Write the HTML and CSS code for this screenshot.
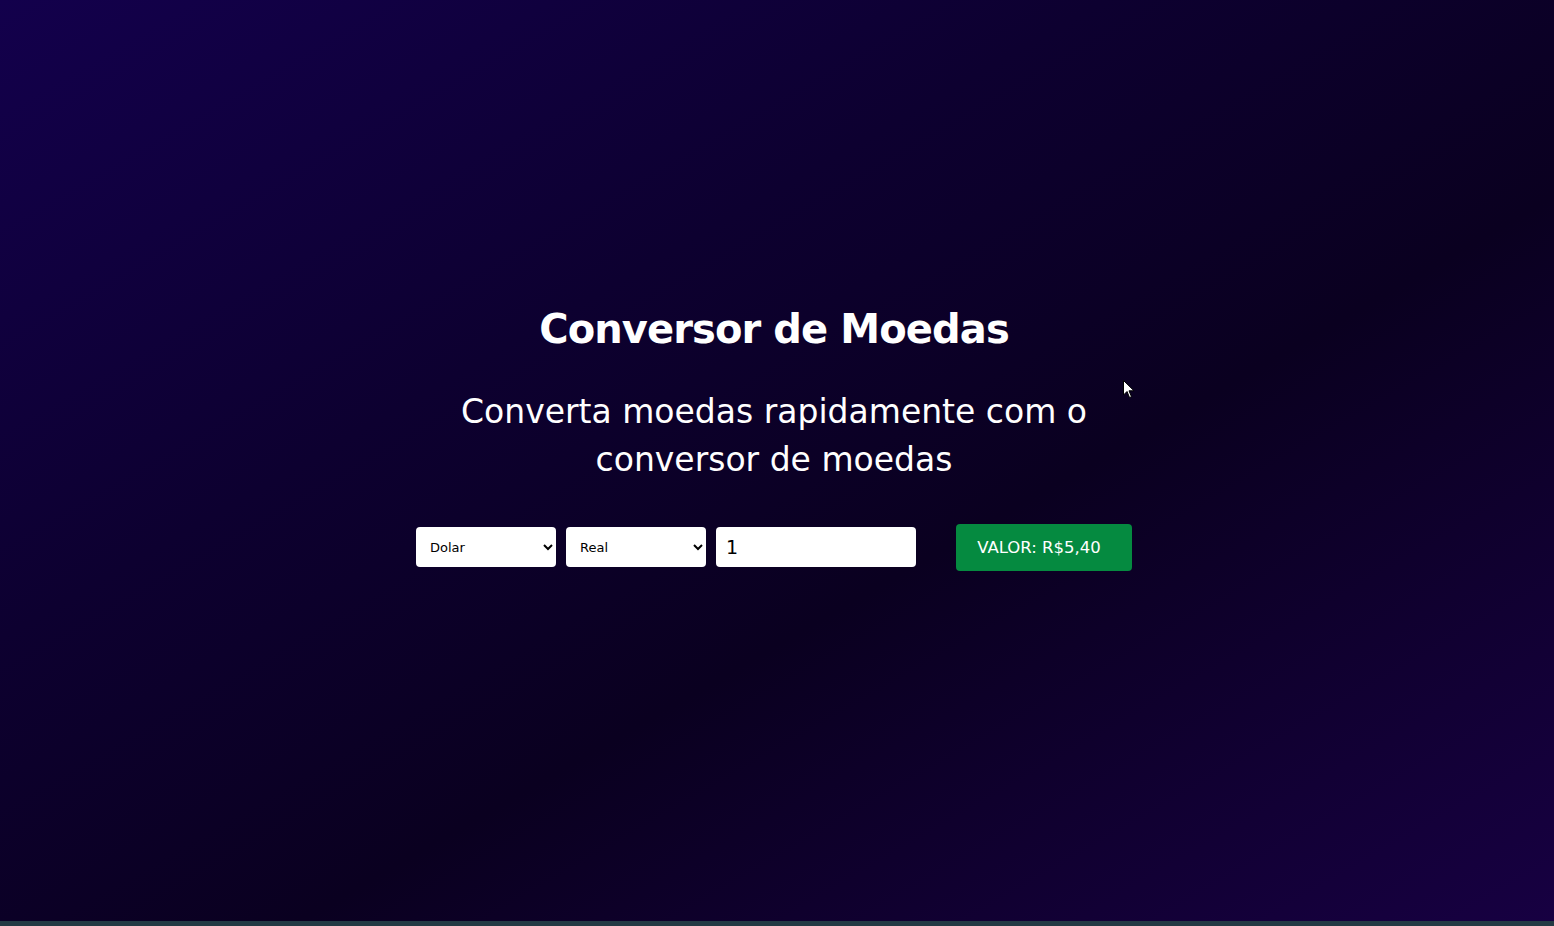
FILE: index.html
```html
<!DOCTYPE html>
<html lang="pt-BR">
<head>
<meta charset="utf-8">
<title>Conversor de Moedas</title>
<link rel="stylesheet" href="styles.css">
</head>
<body>
<main class="page">
  <section class="conversor">
    <h1 class="titulo">Conversor de Moedas</h1>
    <p class="subtitulo">Converta moedas rapidamente com o conversor de moedas</p>
    <div class="controles">
      <select class="campo campo-select">
        <option>Dolar</option>
      </select>
      <select class="campo campo-select">
        <option>Real</option>
      </select>
      <input class="campo campo-input" type="text" value="1">
      <button class="botao">VALOR: R$5,40</button>
    </div>
  </section>
</main>
<div class="barra"></div>
<svg class="cursor" width="12" height="19" viewBox="0 0 12 19"><path d="M0.5 0.5 L0.5 15 L4 11.5 L6.5 17.5 L8.5 16.7 L6 10.8 L11 10.8 Z" fill="#fff" stroke="#000" stroke-width="1"/></svg>
</body>
</html>
```
FILE: styles.css
```css
* { box-sizing: border-box; }
html, body { margin: 0; padding: 0; height: 100%; }
body {
  font-family: "DejaVu Sans", "Open Sans", sans-serif;
  background: linear-gradient(150deg, #13004c 0%, #0d0030 35%, #0a0020 60%, #170042 100%);
  color: #fff;
  overflow: hidden;
  position: relative;
}
.page {
  height: 921px;
  display: flex;
  justify-content: center;
  padding-right: 6px;
}
.conversor {
  display: flex;
  flex-direction: column;
  align-items: center;
  padding-top: 301px;
}
.titulo {
  margin: 0;
  font-size: 40px;
  line-height: 56px;
  font-weight: 700;
  letter-spacing: -0.9px;
}
.subtitulo {
  margin: 31px 0 0;
  width: 680px;
  text-align: center;
  font-size: 33px;
  line-height: 48px;
  font-weight: 400;
}
.controles {
  margin-top: 43px;
  display: flex;
  align-items: flex-start;
  gap: 10px;
}
.campo {
  height: 40px;
  border: none;
  border-radius: 4px;
  background: #fff;
  color: #000;
  font-family: "DejaVu Sans", sans-serif;
}
.campo-select {
  width: 140px;
  font-size: 13px;
  padding: 0 10px;
}
.campo-input {
  width: 200px;
  font-size: 19px;
  padding: 0 10px;
  outline: none;
}
.botao {
  margin: -3px 0 0 30px;
  width: 176px;
  height: 47px;
  border: none;
  border-radius: 4px;
  background: #058a40;
  color: #fff;
  font-family: "DejaVu Sans", sans-serif;
  font-size: 16.5px;
  padding: 0 10px 0 0;
}
.barra {
  height: 5px;
  background: #233a44;
}
.cursor {
  position: absolute;
  left: 1123px;
  top: 380px;
}
```
